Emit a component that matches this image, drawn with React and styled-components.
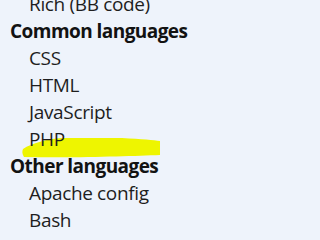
import React from "react";
import styled, { createGlobalStyle } from "styled-components";

const Global = createGlobalStyle`
  html, body { margin: 0; padding: 0; background: #eef3fb; overflow: hidden; }
  body { font-family: "Open Sans", "Noto Sans", sans-serif; }
`;

const Menu = styled.div`
  display: flex;
  flex-direction: column;
  margin-top: -9px;
  width: 273px;
`;

const Header = styled.div`
  font-size: 19px;
  line-height: 27px;
  font-weight: 700;
  letter-spacing: -0.55px;
  color: #121212;
  padding-left: 10px;
  white-space: nowrap;
`;

const Item = styled.div`
  position: relative;
  font-size: 19px;
  line-height: 27px;
  font-weight: 400;
  letter-spacing: -0.35px;
  color: #1e1e1e;
  padding-left: 29px;
  white-space: nowrap;
`;

const Label = styled.span`
  position: relative;
  z-index: 1;
`;

const Highlight = styled.svg`
  position: absolute;
  left: 22px;
  top: 11px;
  width: 139px;
  height: 22px;
  z-index: 0;
  pointer-events: none;
`;

export default function App() {
  return (
    <>
      <Global />
      <Menu>
        <Item><Label>Rich (BB code)</Label></Item>
        <Header>Common languages</Header>
        <Item><Label>CSS</Label></Item>
        <Item><Label>HTML</Label></Item>
        <Item><Label>JavaScript</Label></Item>
        <Item>
          <Highlight viewBox="0 0 139 22">
            <path
              d="M1,12 C10,6 25,2 40,1 L100,1 C120,2 132,3 138,4 L138,18 C110,19 60,21 2,20 C0,17 0,14 1,12 Z"
              fill="#eef500"
            />
          </Highlight>
          <Label>PHP</Label>
        </Item>
        <Header>Other languages</Header>
        <Item><Label>Apache config</Label></Item>
        <Item><Label>Bash</Label></Item>
      </Menu>
    </>
  );
}
